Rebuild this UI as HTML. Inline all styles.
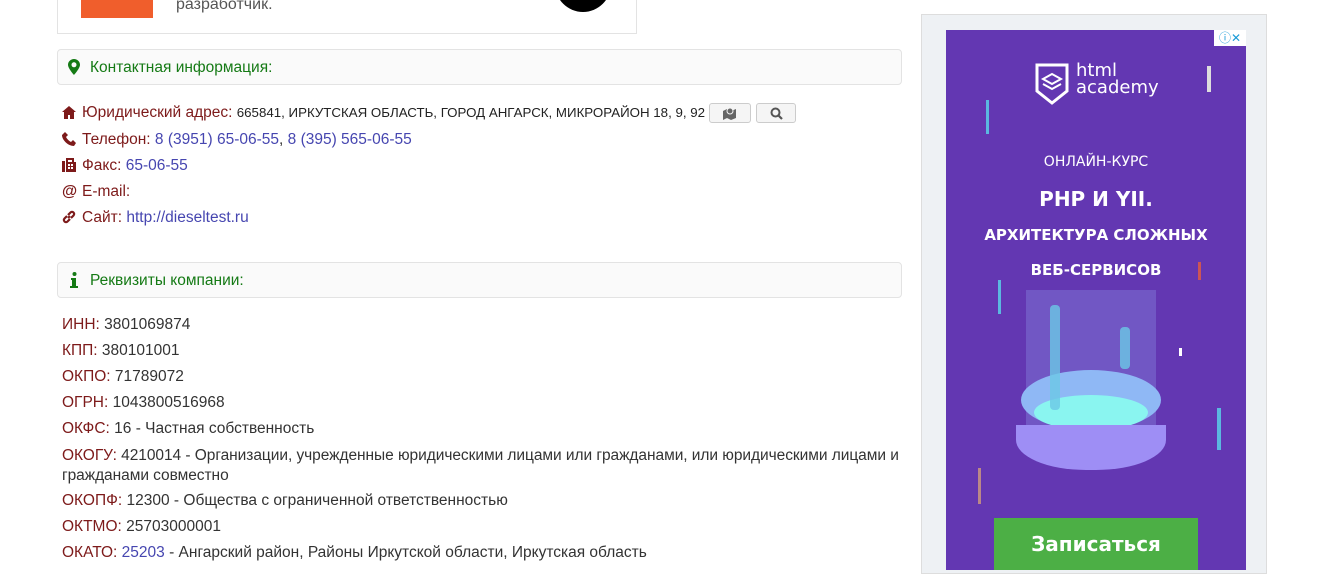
<!DOCTYPE html>
<html><head><meta charset="utf-8"><style>
*{margin:0;padding:0;box-sizing:border-box}
body{width:1338px;height:560px;overflow:hidden;background:#fff;font-family:"Liberation Sans",sans-serif;position:relative}
.abs{position:absolute}
.panel{position:absolute;left:57px;width:845px;height:36px;background:#fafafa;border:1px solid #e3e3e3;border-radius:4px;color:#157a15;font-size:15.5px;line-height:36px;padding-left:32px}
.row{position:absolute;left:62px;font-size:15.5px;color:#333;white-space:nowrap}
.ic{display:inline-block;width:14px;margin-right:6px;vertical-align:-2px}
.l{color:#7d1a1a}
a{color:#4646b0;text-decoration:none}
.btn{display:inline-block;width:42px;height:20px;border:1px solid #ccc;border-radius:3px;background:#f5f5f5;vertical-align:middle;position:relative}
.adt{position:absolute;left:0;width:300px;text-align:center;color:#fff;font-family:"DejaVu Sans",sans-serif}
</style></head><body>
<div class="abs" style="left:57px;top:-10px;width:580px;height:44px;border:1px solid #e3e3e3"></div>
<div class="abs" style="left:81px;top:0;width:72px;height:18px;background:#f05e2c"></div>
<div class="abs" style="left:176px;top:-4px;font-size:16px;color:#555">разработчик.</div>
<div class="abs" style="left:555px;top:-16px;width:56px;height:28px;background:#000;border-radius:0 0 28px 28px"></div>

<div class="panel" style="top:49px">Контактная информация:</div>
<svg class="abs" style="left:68px;top:59px" width="12" height="16" viewBox="0 0 12 16"><path d="M6 0C2.7 0 0 2.6 0 5.8 0 9.5 6 16 6 16s6-6.5 6-10.2C12 2.6 9.3 0 6 0zm0 8.3A2.5 2.5 0 1 1 6 3.3a2.5 2.5 0 0 1 0 5z" fill="#157a15"/></svg>

<div class="row" style="top:103px"><svg class="ic" width="14" height="13" viewBox="0 0 14 13"><path d="M7 0L0 6h2v7h4V9h2v4h4V6h2z" fill="#7d1a1a"/></svg><span class="l">Юридический адрес:</span> <span style="font-size:13.3px;color:#222">665841, ИРКУТСКАЯ ОБЛАСТЬ, ГОРОД АНГАРСК, МИКРОРАЙОН 18, 9, 92</span> <span class="btn"><svg style="position:absolute;left:13px;top:3px" width="15" height="13" viewBox="0 0 15 13"><path d="M0 4l4-2 4 2 5-2v9l-5 2-4-2-4 2z" fill="#666"/><circle cx="7" cy="4" r="3" fill="#666" stroke="#f5f5f5"/></svg></span> <span class="btn" style="width:40px"><svg style="position:absolute;left:13px;top:3px" width="13" height="13" viewBox="0 0 13 13"><circle cx="5.5" cy="5.5" r="4" fill="none" stroke="#555" stroke-width="2"/><path d="M8.5 8.5l3.5 3.5" stroke="#555" stroke-width="2.2"/></svg></span></div>
<div class="row" style="top:131px"><svg class="ic" width="14" height="14" viewBox="0 0 14 14"><path d="M3 0l3 3-2 2c1 2 3 4 5 5l2-2 3 3-2 3C6 14 0 8 0 3z" fill="#7d1a1a"/></svg><span class="l">Телефон:</span> <a>8 (3951) 65-06-55</a>, <a>8 (395) 565-06-55</a></div>
<div class="row" style="top:157px"><svg class="ic" width="14" height="14" viewBox="0 0 14 14"><path d="M0 3h3v11H0zM4 0h8v4h2v10H4zM6 2v2h4V2z" fill="#7d1a1a"/><path d="M6 6h2v2H6zM9 6h2v2H9zM6 9h2v2H6zM9 9h2v2H9z" fill="#fff"/></svg><span class="l">Факс:</span> <a>65-06-55</a></div>
<div class="row" style="top:183px"><span class="l" style="font-weight:bold;display:inline-block;width:14px;margin-right:6px">@</span><span class="l">E-mail:</span></div>
<div class="row" style="top:209px"><svg class="ic" width="14" height="14" viewBox="0 0 14 14"><path d="M6 8l2-2M5 6L2.5 8.5a2 2 0 0 0 3 3L8 9M9 8l2.5-2.5a2 2 0 0 0-3-3L6 5" fill="none" stroke="#7d1a1a" stroke-width="2.2"/></svg><span class="l">Сайт:</span> <a>http://dieseltest.ru</a></div>

<div class="panel" style="top:262px">Реквизиты компании:</div>
<svg class="abs" style="left:70px;top:272px" width="8" height="16" viewBox="0 0 8 16"><circle cx="4.5" cy="2" r="2" fill="#157a15"/><path d="M1 6h5v8h2v2H0v-2h2V8H1z" fill="#157a15"/></svg>

<div class="row" style="top:316px"><span class="l">ИНН:</span> 3801069874</div>
<div class="row" style="top:342px"><span class="l">КПП:</span> 380101001</div>
<div class="row" style="top:368px"><span class="l">ОКПО:</span> 71789072</div>
<div class="row" style="top:394px"><span class="l">ОГРН:</span> 1043800516968</div>
<div class="row" style="top:420px"><span class="l">ОКФС:</span> 16 - Частная собственность</div>
<div class="row" style="top:446px;line-height:20px;white-space:normal;width:842px;letter-spacing:-0.05px"><span class="l">ОКОГУ:</span> 4210014 - Организации, учрежденные юридическими лицами или гражданами, или юридическими лицами и гражданами совместно</div>
<div class="row" style="top:492px"><span class="l">ОКОПФ:</span> 12300 - Общества с ограниченной ответственностью</div>
<div class="row" style="top:518px"><span class="l">ОКТМО:</span> 25703000001</div>
<div class="row" style="top:544px"><span class="l">ОКАТО:</span> <a>25203</a> - Ангарский район, Районы Иркутской области, Иркутская область</div>

<div class="abs" style="left:921px;top:14px;width:346px;height:560px;background:#eef1f4;border:1px solid #ddd"></div>
<div class="abs" style="left:946px;top:30px;width:300px;height:540px;background:#6337b2;overflow:hidden">
 <div class="abs" style="left:268px;top:0;width:32px;height:16px;background:#fff;color:#1a9bd7;font-size:12px;line-height:16px;text-align:center">ⓘ✕</div>
 <svg class="abs" style="left:89px;top:33px" width="34" height="42" viewBox="0 0 34 42"><path d="M2 2h30v26L17 40 2 28z" fill="none" stroke="#fff" stroke-width="3"/><path d="M8 16l9-5 9 5-9 5z M8 21l9 5 9-5" fill="none" stroke="#fff" stroke-width="2"/></svg>
 <div class="abs" style="left:130px;top:32px;color:#fff;font-size:18px;line-height:17px;font-family:'DejaVu Sans',sans-serif">html<br>academy</div>
 <div class="adt" style="top:124px;font-size:14px">ОНЛАЙН-КУРС</div>
 <div class="adt" style="top:157px;font-size:20px;font-weight:bold">PHP И YII.</div>
 <div class="adt" style="top:196px;font-size:15px;font-weight:bold">АРХИТЕКТУРА СЛОЖНЫХ</div>
 <div class="adt" style="top:231px;font-size:15px;font-weight:bold">ВЕБ-СЕРВИСОВ</div>
 <div class="abs" style="left:40px;top:70px;width:3px;height:34px;background:#5bb8e0"></div>
 <div class="abs" style="left:261px;top:36px;width:4px;height:26px;background:#ddd"></div>
 <div class="abs" style="left:52px;top:250px;width:3px;height:34px;background:#5bb8e0"></div>
 <div class="abs" style="left:252px;top:232px;width:3px;height:18px;background:#c55"></div>
 <div class="abs" style="left:233px;top:318px;width:3px;height:8px;background:#fff"></div>
 <div class="abs" style="left:271px;top:378px;width:4px;height:42px;background:#5bb8e0"></div>
 <div class="abs" style="left:32px;top:438px;width:3px;height:36px;background:#b88"></div>
 <div class="abs" style="left:80px;top:260px;width:130px;height:150px;background:rgba(140,150,230,.35)"></div>
 <div class="abs" style="left:75px;top:340px;width:140px;height:60px;border-radius:50%;background:#8fb8f5"></div>
 <div class="abs" style="left:88px;top:365px;width:114px;height:35px;border-radius:50%;background:#8af5f0"></div>
 <div class="abs" style="left:70px;top:395px;width:150px;height:45px;background:#9e8ef5;border-radius:0 0 70px 70px/0 0 30px 30px"></div>
 <div class="abs" style="left:104px;top:275px;width:10px;height:105px;background:#6cc8e6;border-radius:4px;opacity:.8"></div>
 <div class="abs" style="left:174px;top:297px;width:10px;height:42px;background:#6cc8e6;border-radius:4px;opacity:.8"></div>
 <div class="abs" style="left:48px;top:488px;width:204px;height:60px;background:#4caf45"></div>
 <div class="adt" style="left:48px;width:204px;top:502px;font-size:20px;font-weight:bold">Записаться</div>
</div>
</body></html>
